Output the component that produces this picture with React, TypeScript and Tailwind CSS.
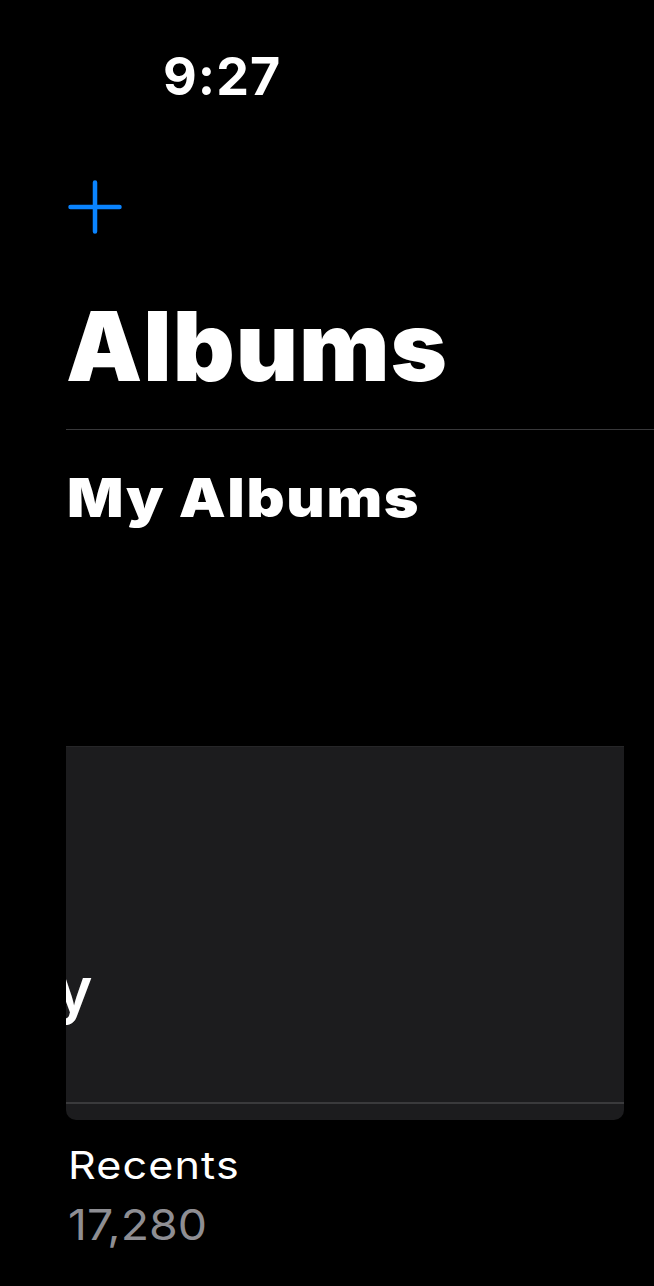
import React from "react";

export default function App() {
  return (
    <div className="w-[654px] h-[1286px] bg-black overflow-hidden font-['Inter','Liberation_Sans',sans-serif] text-white">
      {/* status bar */}
      <div className="pt-[51px] pl-[163px]">
        <div className="text-[52px] leading-none font-bold tracking-[1px]">9:27</div>
      </div>

      {/* add button */}
      <div className="pt-[77px] pl-[68px]">
        <svg width="54" height="54" viewBox="0 0 54 54" fill="none">
          <path d="M27 2.5V51.5M2.5 27H51.5" stroke="#0a84ff" strokeWidth="4.5" strokeLinecap="round" />
        </svg>
      </div>

      {/* title */}
      <div className="pt-[64px] pl-[66px]">
        <h1 className="text-[96px] leading-none font-black tracking-[1px]">Albums</h1>
      </div>

      {/* separator */}
      <div className="ml-[66px] mt-[35px] h-px bg-[#38383a]" />

      {/* section header */}
      <div className="pt-[42px] pl-[67px]">
        <h2 className="text-[53px] leading-none font-black tracking-[1.5px] origin-left scale-x-[1.115]">My Albums</h2>
      </div>

      {/* album card */}
      <div className="mt-[221px] ml-[66px] w-[558px]">
        <div className="h-[374px] bg-[#1c1c1e] rounded-b-[10px] overflow-hidden flex flex-col border-t border-[#262628]">
          <div className="flex-1 flex flex-col">
            <div className="pt-[212px] -ml-[10px]">
              <span className="text-[62px] leading-none font-semibold">y</span>
            </div>
          </div>
          <div className="h-[2px] bg-[#3a3a3c] mb-[16px]" />
        </div>

        <div className="pt-[26px] pl-[2px]">
          <div className="text-[38.5px] leading-none font-normal tracking-[1px] origin-left scale-x-[1.12]">Recents</div>
          <div className="mt-[19px] text-[42px] leading-none font-normal text-[#8e8e93] origin-left scale-x-[1.105]">17,280</div>
        </div>
      </div>
    </div>
  );
}
